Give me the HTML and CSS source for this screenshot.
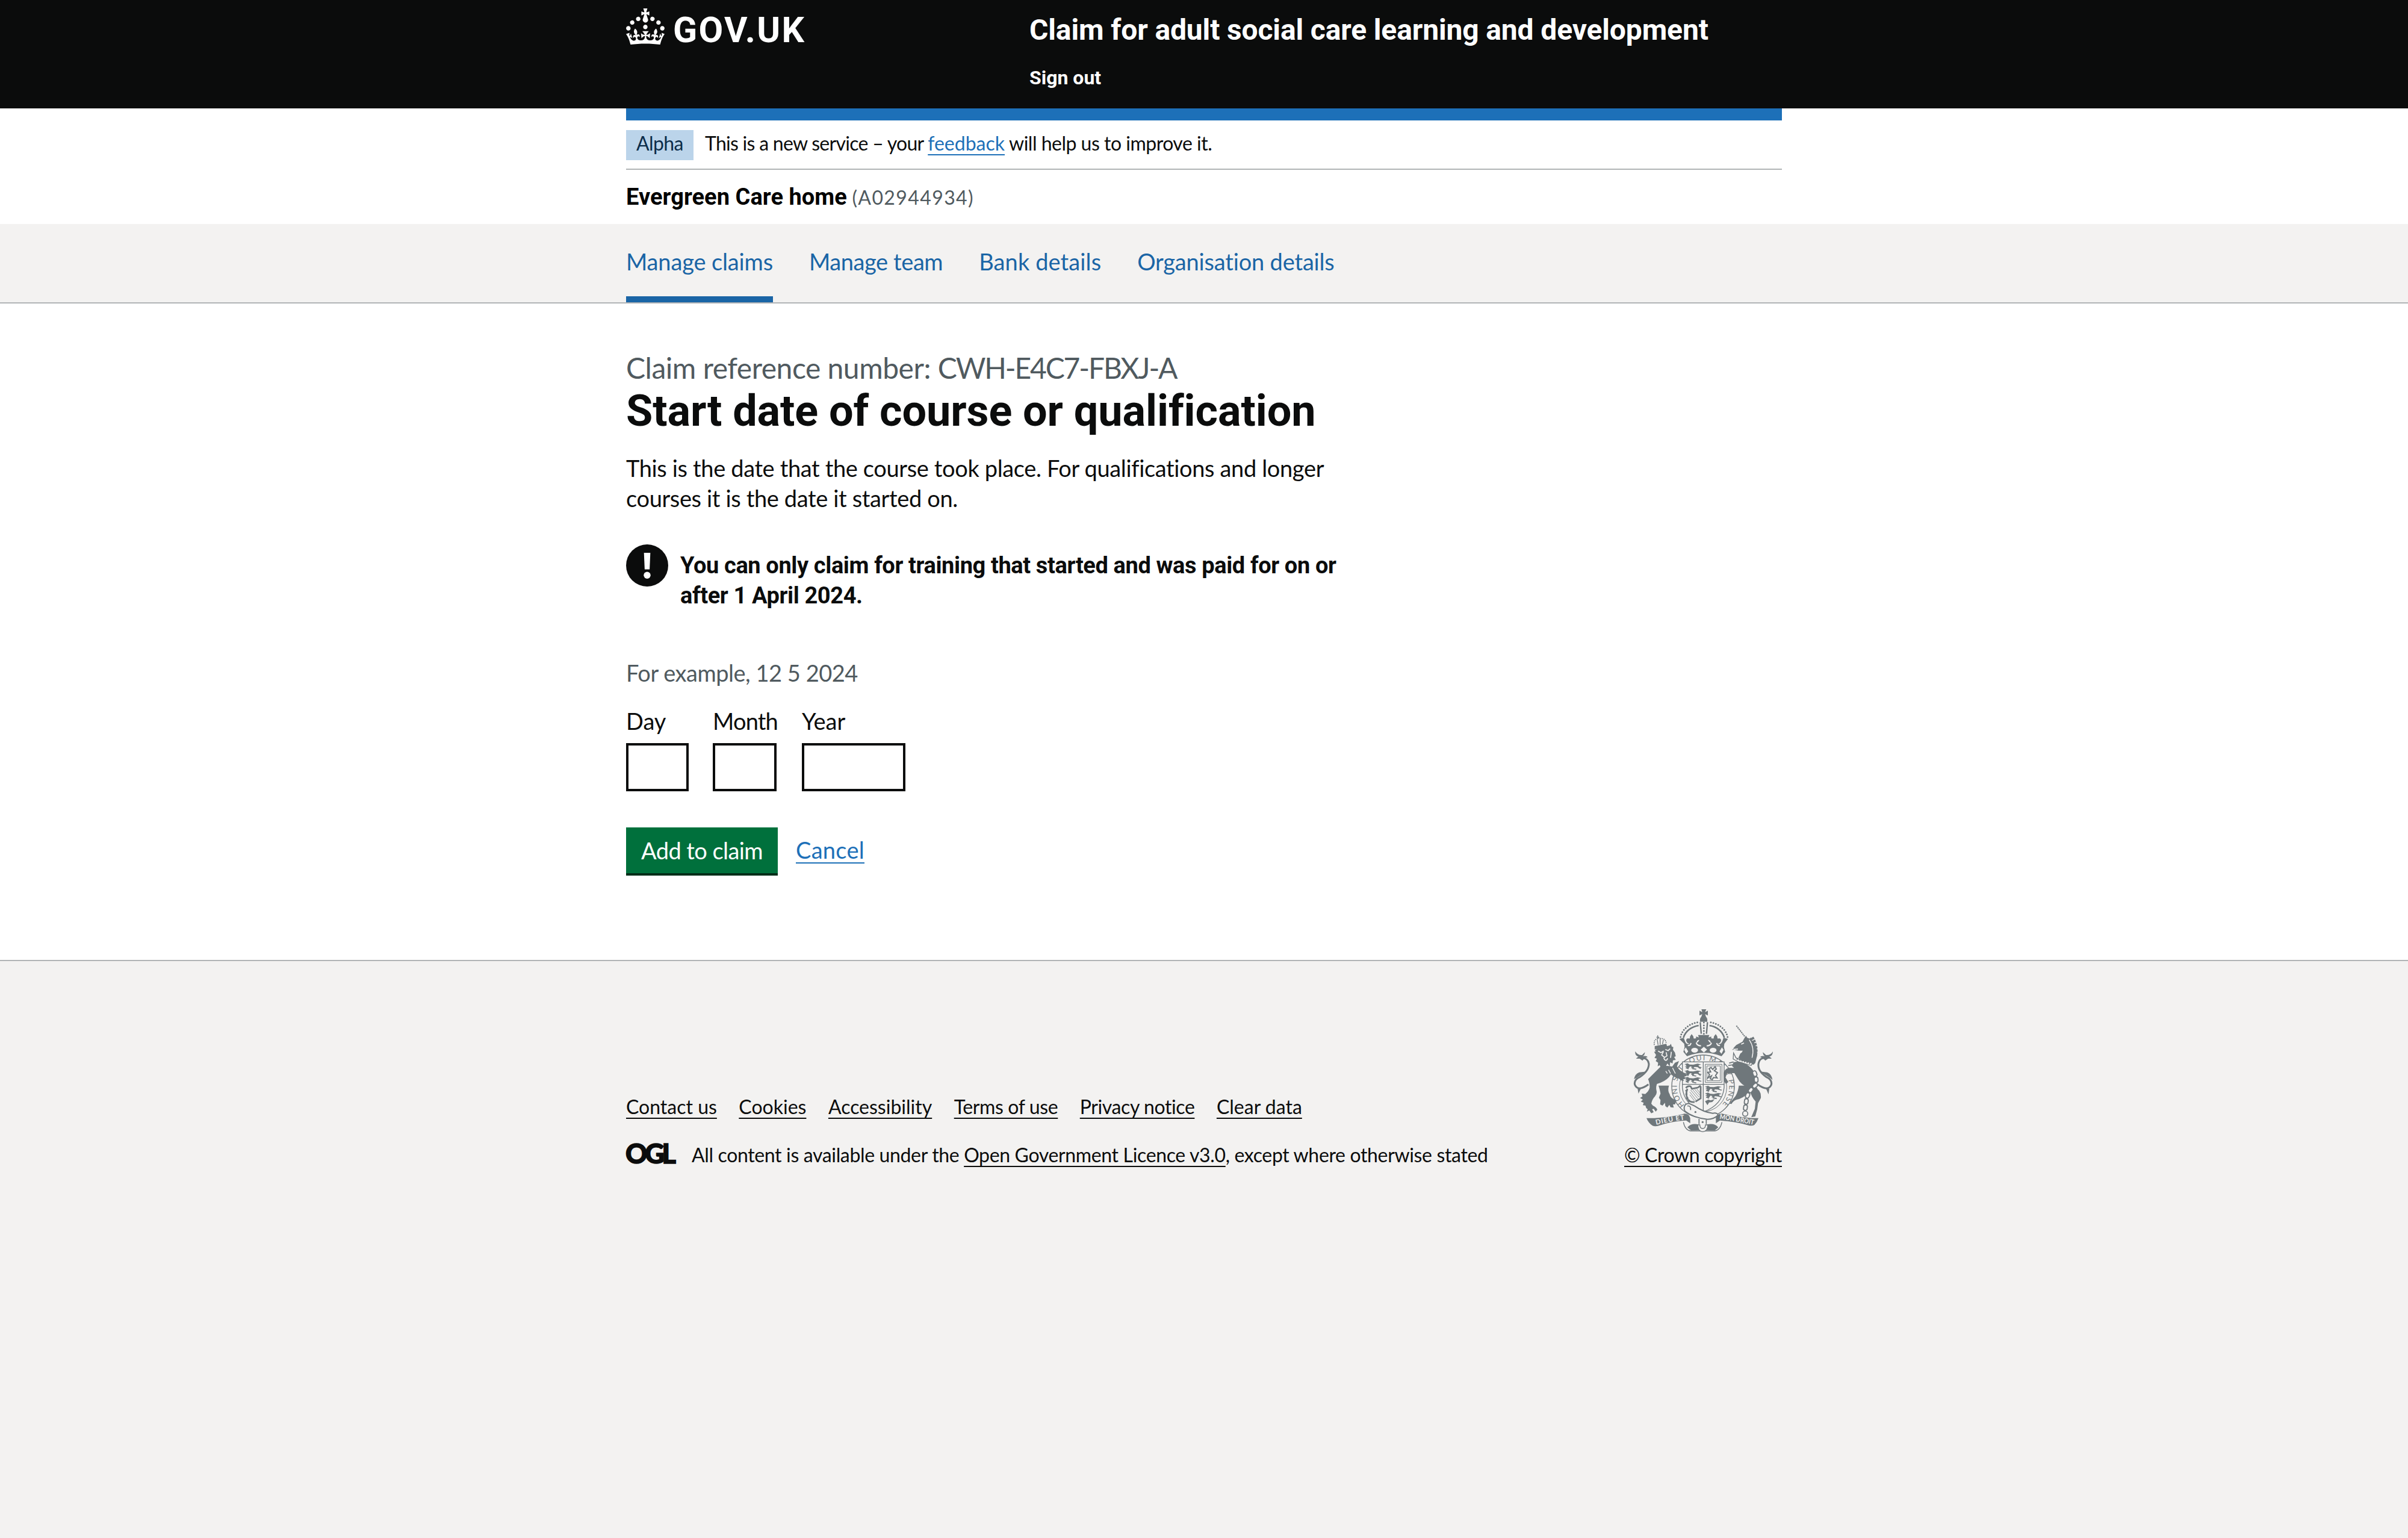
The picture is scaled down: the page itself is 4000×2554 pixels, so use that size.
FILE: index.html
```html
<!DOCTYPE html>
<html lang="en">
<head>
<meta charset="utf-8">
<title>Start date of course or qualification</title>
<link rel="stylesheet" href="styles.css">
</head>
<body>
<header class="header">
  <div class="container header-row">
    <a class="logo" aria-label="GOV.UK">
      <svg class="crown" viewBox="0 0 32 30"><path d="M22.6 10.4c-1 .4-2-.1-2.4-1-.4-.9.1-2 1-2.4.9-.4 2 .1 2.4 1s-.1 2-1 2.4m5 3c-1 .4-2-.1-2.4-1-.4-.9.1-2 1-2.4.9-.4 2 .1 2.4 1s0 2-1 2.4m-10.900 3.700c-.9.4-2-.1-2.400-1-.4-.9.1-2 1-2.400.9-.4 2 .1 2.400 1s-.1 2-1 2.400m14.100 1.100c-1 .4-2-.1-2.400-1-.4-.9.1-2 1-2.400.9-.4 2 .1 2.400 1s-.1 2-1 2.400M17 4.700l2.300 1.200V2.500l-2.300.7-.2-.2.9-3h-3.400l.9 3-.2.2c-.1.1-2.300-.7-2.300-.7v3.400L15 4.700c.1.1.1.2.2.2l-1.300 4c-.1.2-.1.4-.1.6 0 1.100.8 2 1.900 2.200h.7c1-.2 1.900-1.100 1.900-2.100 0-.2 0-.4-.1-.6l-1.300-4c-.1-.2 0-.2.1-.3m-7.600 5.700c.9.4 2-.1 2.400-1 .4-.9-.1-2-1-2.400-.9-.4-2 .1-2.400 1s0 2 1 2.400m-5 3c.9.4 2-.1 2.400-1 .4-.9-.1-2-1-2.400-.9-.4-2 .1-2.400 1s.1 2 1 2.400m-3.200 4.800c.9.4 2-.1 2.400-1 .4-.9-.1-2-1-2.400-.9-.4-2 .1-2.400 1s0 2 1 2.400m14.800 11c4.400 0 8.600.3 12.300.8 1.100-4.500 2.400-7 3.700-8.800l-2.500-.9c.2 1.300.3 1.900 0 2.700-.4-.4-.8-1.100-1.100-2.300l-1.200 4c.7-.5 1.300-.8 2-.9-1.100 2.500-2.600 3.100-3.500 3-1.100-.2-1.700-1.200-1.500-2.100.3-1.200 1.500-1.500 2.100-.1 1.100-2.300-.8-3-2-2.300 1.900-1.900 2.100-3.500.6-5.600-2.100 1.600-2.100 3.200-1.200 5.500-1.200-1.400-3.200-.6-2.500 1.600.9-1.400 2.100-.5 1.900.8-.2 1.100-1.700 2.100-3.500 1.900-2.700-.2-2.900-2.100-2.900-3.600.7-.1 1.900.5 2.900 1.900l.4-4.300c-1.100 1.100-2.100 1.400-3.200 1.400.4-1.200 2.100-3 2.100-3h-5.400s1.700 1.900 2.100 3c-1.100 0-2.100-.2-3.200-1.400l.4 4.300c1-1.400 2.200-2 2.900-1.900-.1 1.500-.2 3.400-2.900 3.600-1.900.2-3.400-.8-3.500-1.900-.2-1.300 1-2.200 1.900-.8.7-2.300-1.200-3-2.500-1.600.9-2.200.9-3.900-1.200-5.500-1.500 2-1.300 3.700.6 5.600-1.200-.7-3.100 0-2 2.300.6-1.400 1.800-1.100 2.100.1.2.9-.3 1.900-1.500 2.100-.9.2-2.400-.5-3.500-3 .6 0 1.200.3 2 .9l-1.200-4c-.3 1.100-.7 1.900-1.100 2.300-.3-.8-.2-1.400 0-2.700l-2.900.9C1.300 23 2.600 25.500 3.700 30c3.700-.5 7.900-.8 12.300-.8"/></svg>
      <svg class="wordmark" viewBox="0 0 220 60"><text x="-2" y="56" textLength="218" lengthAdjust="spacing">GOV.UK</text></svg>
    </a>
    <div class="header-content">
      <a class="service-name">Claim for adult social care learning and development</a>
      <a class="sign-out">Sign out</a>
    </div>
  </div>
</header>

<div class="container">
  <div class="blue-bar"></div>
  <div class="phase">
    <strong class="tag">Alpha</strong>
    <p class="phase-text"><span class="t-service">This is a new service – your </span><a class="link t-feedback">feedback</a><span class="t-help"> will help us to improve it.</span></p>
  </div>
  <p class="organisation">Evergreen Care home <span class="org-id">(A02944934)</span></p>
</div>

<nav class="nav">
  <div class="container nav-list">
    <a class="nav-link nav-claims active">Manage claims</a>
    <a class="nav-link nav-team">Manage team</a>
    <a class="nav-link nav-bank">Bank details</a>
    <a class="nav-link nav-org">Organisation details</a>
  </div>
</nav>

<main class="container main">
  <span class="caption">Claim reference number: <span class="reference">CWH-E4C7-FBXJ-A</span></span>
  <h1 class="heading">Start date of course or qualification</h1>
  <p class="body">This is the date that the course took place. For qualifications and longer courses it is the date it started on.</p>
  <div class="warning">
    <svg class="warning-icon" viewBox="0 0 70 70"><circle cx="35" cy="35" r="35" fill="#0b0c0c"/><path d="M29.700 14h10.600l-1.200 27.500h-8.200z" fill="#fff"/><circle cx="35" cy="51.300" r="5.700" fill="#fff"/></svg>
    <strong class="warning-text">You can only claim for training that started and was paid for on or after 1 April 2024.</strong>
  </div>
  <div class="hint">For example, 12 5 2024</div>
  <div class="dates">
    <div class="date-item"><label class="label t-day" for="day">Day</label><input class="input input-day" id="day"></div>
    <div class="date-item item-month"><label class="label t-month" for="month">Month</label><input class="input input-month" id="month"></div>
    <div class="date-item"><label class="label t-year" for="year">Year</label><input class="input input-year" id="year"></div>
  </div>
  <div class="actions">
    <button class="button">Add to claim</button>
    <a class="link cancel">Cancel</a>
  </div>
</main>

<footer class="footer">
  <div class="container footer-row">
    <div class="footer-main">
      <div class="footer-links">
        <a class="f-link f-contact">Contact us</a>
        <a class="f-link f-cookies">Cookies</a>
        <a class="f-link f-access">Accessibility</a>
        <a class="f-link f-terms">Terms of use</a>
        <a class="f-link f-privacy">Privacy notice</a>
        <a class="f-link f-clear">Clear data</a>
      </div>
      <div class="licence">
        <svg class="ogl" viewBox="0 0 84 36"><text x="-1" y="33.500" textLength="84" lengthAdjust="spacing">OGL</text></svg>
        <p class="licence-text"><span>All content is available under the </span><a class="f-link">Open Government Licence v3.0</a><span>, except where otherwise stated</span></p>
      </div>
    </div>
    <div class="copyright">
      <svg class="crest" viewBox="102 288 696 612" fill="#6f777b">
        <!-- imperial crown -->
        <path d="M442 288h24l-6 14 14-7v24l-14-7 5 14q8 6 6 24h-36q-2-18 6-24l5-14-14 7v-24l14 7z"/>
        <g fill="none" stroke="#6f777b">
          <path d="M338 426C346 384 390 354 434 352M572 426C564 384 520 354 476 352" stroke-width="9" stroke-linecap="round" stroke-dasharray="0 13"/>
          <path d="M352 430C362 396 394 374 428 369M556 430C546 396 516 374 482 369" stroke-width="8"/>
          <path d="M436 352l5 58M472 352l-5 58" stroke-width="7"/>
          <path d="M454 354v60" stroke-width="9" stroke-linecap="round" stroke-dasharray="0 14"/>
        </g>
        <path d="M332 436l22-6 6 18q8 18 22 12-16-4-16-18 2-12 16-8l2-2q0-10 9-20 10 10 10 20l2 2q14-4 16 8 0 10-8 14 12 0 18-14l-2-2-14 8v-24l14 4-4-12h56l-4 12 14-4v24l-14-8-2 2q6 14 18 14-8-4-8-14 2-12 16-8l2-2q0-10 10-20 9 10 9 20l2 2q14-4 16 8 0 14-16 18 14 6 22-12l6-18 22 6-18 24-2 16 6 24-18 22q-86-34-172 0l-18-22 6-24-2-16z"/>
        <g fill="#f3f2f1">
          <ellipse cx="408" cy="492" rx="17" ry="12"/><ellipse cx="500" cy="492" rx="17" ry="12"/>
          <path d="M438 489l16-14 16 14-16 14zM356 490l8-12 12 20-10 12zM552 490l-8-12-12 20 10 12z"/>
        </g>
        <path d="M374 468q12 4 16-12M416 456q6 14 24 14M534 468q-12 4-16-12M492 456q-6 14-24 14" fill="none" stroke="#f3f2f1" stroke-width="6"/>
        <!-- garter -->
        <ellipse cx="450" cy="672" rx="156" ry="156" fill="#f3f2f1" stroke="#6f777b" stroke-width="4"/>
        <path id="garter" d="M358 765A131 131 0 0 1 335 610A131 131 0 0 1 575 635A131 131 0 0 1 470 802" fill="none"/>
        <text class="motto"><textPath href="#garter" textLength="610" lengthAdjust="spacing">HONI SOIT QUI MAL Y PENSE</textPath></text>
        <ellipse cx="450" cy="676" rx="118" ry="122" fill="#f3f2f1" stroke="#6f777b" stroke-width="3"/>
        <!-- shield -->
        <path d="M347 550h208v128q-8 86-104 122-96-36-104-122z" fill="#f3f2f1" stroke="#6f777b" stroke-width="4"/>
        <path d="M451 550v248M347 662h208" stroke="#6f777b" stroke-width="4"/>
        <path id="lion" d="M357 562l16-5 10 6 18 1 22-5 18 4-14 4 4 7 12 3-4 4-18-5-14-1-4 6-14 0 6-6-10-3-6 9-16 1 6-7-10-3 8-3-2-4z"/>
        <use href="#lion" y="34"/><use href="#lion" y="68"/>
        <path d="M364 579l14 6M396 583l20 4M426 576l12 8M364 613l14 6M396 617l20 4M426 610l12 8M364 647l14 6M396 651l20 4" stroke="#6f777b" stroke-width="5"/>
        <g transform="translate(102 112)"><use href="#lion"/><use href="#lion" y="34"/><path d="M364 579l14 6M396 583l20 4M364 613l14 6M396 617l20 4" stroke="#6f777b" stroke-width="6"/></g>
        <path d="M460 746l16-8 12 4 20-6-12 14-16 2-8 14z"/>
        <g fill="none" stroke="#6f777b">
          <path d="M461 562h83v90h-83zM469 570h67v74h-67z" stroke-width="3"/>
          <path d="M480 584l10-6 8 10 12-14 6 12-10 8 16 10-10 14 8 12-18-2-6 10-10-4 6-14-18 10 8-16-8-12 14-2z" stroke-width="6"/>
          <path d="M364 680q10-12 24-8l6 12 30-6 14-10M372 684q-12 30 4 56 10 12 32 10M438 672v60l-26 16" stroke-width="8"/>
          <path d="M388 690l36 44M384 700l32 42M398 688l32 38M408 686l26 30M418 684l18 22M384 714l24 32" stroke-width="2.500"/>
          <path d="M362 692l10 4M362 712l10-2M366 732l10-4M376 748l8-8" stroke-width="7"/>
        </g>
        <!-- lion supporter -->
        <path d="M246 574q24-8 50 0l14-20 20-8-10 26q10 22 44 36l4 12-12 4 10 8-16 6 6 8-16-4-10-8q-24-6-40-22l-10 14q-20 22-60 34-6 18-2 34 4 14-8 28-14 14-18 36l8 10q16 6 22 20l-8 10-10-14-8 2 8 14-12 6-10-14-12 6 4-12q-12-8-10-18l-14-2 4-12-14-6 10-10-14-8 12-8-4-14 18 2q18-14 22-32 0-26-8-42 40-40 70-70z"/>
        <path d="M228 668h52q-8 26 4 44 2 20 34 30l-8 20h-10l4 16-16-2-6-12-10 14-10-8-2-16-12 14-12-6 2-22-8-12 8-20q-4-24-10-40z"/>
        <path d="M264 596l8 12M278 590l10 18M298 580l14 28" stroke="#f3f2f1" stroke-width="4"/>
        <path d="M209 472l58-12 4 14-62 14z"/>
        <path d="M207 466q-4-30 20-32 6-6 12 0 24-2 28 24" fill="none" stroke="#6f777b" stroke-width="5" stroke-dasharray="5 4"/>
        <path d="M224 418v20M217 427h14M236 436v28M222 440l4 26M252 440l-4 22" fill="none" stroke="#6f777b" stroke-width="4"/>
        <path d="M210 492l12-8 62-16 6-8 4 14 8 2-2 14 10 14 4 18-8 4 8 14-14 2-2 16-12-6-2 20-12-14-10 20-12-4-8 14-8-22-10 6 2-18-12-8 6-12-12-4 8-14-10-16 8-2z"/>
        <path d="M226 496l14 8 14-8M262 488l14 6 10-10M252 500l-8 16 14 12 12-8-4-18M254 530q10 24 20 2M292 500l-4 30" fill="none" stroke="#f3f2f1" stroke-width="5"/>
        <path d="M178 662Q126 700 110 664Q104 640 134 626Q180 596 180 560Q174 526 138 532" fill="none" stroke="#6f777b" stroke-width="9"/>
        <path d="M112 498q14 20 34 18l14-14q0 14-10 20 16-4 24 4-18 6-26 18l-14-10-18 0q6-8 12-10-18-4-16-26zM106 636q4-26 26-34l40-4-26 14-28 18zM128 708l-4-24h16q-6 12-12 24z"/>
        <!-- unicorn supporter -->
        <path d="M616 370l42 54" stroke="#6f777b" stroke-width="6" stroke-dasharray="7 3"/>
        <path d="M600 484l6-8 10-10 30-16 12-22 6-8 6 10 12 4 6-6 2 12q14 8 20 24l8 22 2 30-10 40-8 8q-50-12-76-34l10-22q8-4 12-14l-22 0-10-2-12-2-10 0 10-6z"/>
        <path d="M640 462l14-6M602 488l22-2" stroke="#f3f2f1" stroke-width="5"/>
        <path d="M688 432q28 46 14 92" fill="none" stroke="#6f777b" stroke-width="30" stroke-dasharray="11 4"/>
        <path d="M680 440q28 40 14 90" fill="none" stroke="#f3f2f1" stroke-width="4"/>
        <path d="M602 506l12 24 26 12 56 14-6 12-60-16-30-16z" fill="#f3f2f1" stroke="#6f777b" stroke-width="4"/>
        <path d="M618 534l70 24" stroke="#6f777b" stroke-width="9" stroke-dasharray="6 7"/>
        <path d="M580 556l22-6M576 568l26-4" stroke="#6f777b" stroke-width="5"/>
        <path d="M602 552q30-10 64 10 26 16 38 38 14 30 10 58-2 20 16 36 10 14 8 36l-14 26-4 30-10 36-20 4 18-42 4-36q-22-24-28-54l-6-14q-38-14-56-48l-16-26-36 0-8 22 14 22-12 10-10-14-2-40q8-24 28-26h24l-10-10z"/>
        <path d="M628 668h50q4 22-4 38-24 26-56 32-16 4-26 22l-10-2q14-20 30-38 14-26 16-52z"/>
        <path d="M706 604q14 34 6 62-34 28-44 62l-8 60" fill="none" stroke="#6f777b" stroke-width="24" stroke-linecap="round" stroke-dasharray="9 22"/>
        <path d="M706 604q14 34 6 62-34 28-44 62l-8 60" fill="none" stroke="#f3f2f1" stroke-width="13" stroke-linecap="round" stroke-dasharray="9 22"/>
        <circle cx="660" cy="808" r="13" fill="#f3f2f1" stroke="#6f777b" stroke-width="5"/>
        <path d="M722 662Q774 700 790 664Q796 640 766 626Q722 596 726 560Q732 526 764 532" fill="none" stroke="#6f777b" stroke-width="9"/>
        <path d="M798 498q-12 20-34 18l-16-14q0 14 10 20-16-4-24 4 18 6 26 18l14-10 18 0q-6-8-12-10 18-4 18-26zM796 640q-4-30-26-38l-38-4 24 14 28 18zM776 712l4-28h-16q6 12 12 28z"/>
        <!-- ribbon and belt -->
        <path d="M168 830h40q80-4 150-22 22 0 28 22v26l-20-14q-78 4-136 26-20 6-32 0-20-14-30-38zM726 830h-34q-84-6-148-22-22 0-30 20v28l20-14q84 6 142 24 20 4 30-2 14-16 20-34z"/>
        <path d="M352 850q8 40 36 44h120q28-4 36-44" fill="none" stroke="#6f777b" stroke-width="4"/>
        <path d="M372 876q20-22 56-14l10 28-48 2zM526 876q-20-22-56-14l-10 28 48 2z"/>
        <path d="M356 776q4-20 26-18l26 12q46 32 90 36 26-4 26 10-20 20-52 20-70-6-112-40-6-10-4-20z" fill="#f3f2f1" stroke="#6f777b" stroke-width="6"/>
        <path d="M430 834v26M466 838v22M372 770q18-4 16 20" fill="none" stroke="#6f777b" stroke-width="5"/>
        <path d="M424 864q0 32 24 34 26-2 26-34l-12 0q0 18-14 18-14 0-14-18z" fill="#f3f2f1" stroke="#6f777b" stroke-width="4"/>
        <circle cx="412" cy="800" r="5"/><circle cx="448" cy="850" r="5"/>
        <path id="scroll-left" d="M216 863q70-16 146-26" fill="none"/>
        <path id="scroll-right" d="M532 834q88 12 172 30" fill="none"/>
        <text class="scroll"><textPath href="#scroll-left" textLength="144" lengthAdjust="spacing">DIEU ET</textPath></text>
        <text class="scroll"><textPath href="#scroll-right" textLength="172" lengthAdjust="spacingAndGlyphs">MON DROIT</textPath></text>
      </svg>
      <a class="f-link f-crown">© Crown copyright</a>
    </div>
  </div>
</footer>
</body>
</html>
```

FILE: styles.css
```css
* { box-sizing: border-box; }

body {
  margin: 0;
  min-height: 2554px;
  display: flex;
  flex-direction: column;
  font: 400 38px/50px Lato, "Open Sans", sans-serif;
  color: #0b0c0c;
  background: #fff;
}

p, h1 { margin: 0; }

.container { width: 1920px; margin: 0 auto; }

/* Header */
.header { height: 180px; background: #0b0c0c; color: #fff; }
.header-row { display: flex; }
.logo { width: 670px; display: flex; gap: 16px; padding-top: 14px; }
.crown { width: 64px; height: 60px; fill: #fff; }
.wordmark { width: 220px; height: 60px; overflow: visible; }
.wordmark text { font: 700 59px Roboto, sans-serif; fill: #fff; }
.header-content { display: flex; flex-direction: column; gap: 29px; padding-top: 20px; font-family: Roboto, sans-serif; font-weight: 700; }
.service-name { font-size: 48px; line-height: 60px; letter-spacing: -.14px; }
.sign-out { font-size: 32px; line-height: 40px; }

/* Phase banner and organisation */
.blue-bar { height: 20px; background: #1d70b8; }
.phase { display: flex; gap: 19px; padding: 16px 0 14px; border-bottom: 2px solid #b1b4b6; font-size: 32px; line-height: 44px; }
.tag { width: 112px; height: 50px; text-align: center; font-weight: 400; letter-spacing: -.6px; color: #0c2d4a; background: #bbd4ea; }
.phase-text { height: 50px; white-space: pre; }
.t-service { letter-spacing: -.72px; }
.t-help { letter-spacing: -.5px; }
.link { color: #1d70b8; text-decoration: underline 2px; text-underline-offset: 6px; text-decoration-skip-ink: none; }
.organisation { height: 90px; font: 700 38px/90px Roboto, sans-serif; letter-spacing: .05px; color: #000; }
.org-id { margin-left: -1px; font: 400 32px/40px Lato, sans-serif; letter-spacing: 1.4px; color: #505a5f; }

/* Navigation */
.nav { background: #f3f2f1; border-bottom: 2px solid #b1b4b6; }
.nav-list { display: flex; gap: 60px; }
.nav-link { height: 130px; padding-top: 12px; line-height: 101px; color: #1a65a6; }
.nav-link.active { border-bottom: 10px solid #1a65a6; }
.nav-claims { letter-spacing: -.14px; }
.nav-team { letter-spacing: -.4px; }
.nav-bank { letter-spacing: .11px; }
.nav-org { letter-spacing: -.18px; }

/* Main content */
.main { display: flex; flex-direction: column; padding: 77px 0 140px; }
.caption { font-size: 48px; line-height: 60px; letter-spacing: -.48px; color: #505a5f; }
.reference { letter-spacing: -2.15px; }
.heading { margin-top: 2px; font: 700 72px/80px Roboto, sans-serif; letter-spacing: -.08px; }
.body { width: 1220px; margin-top: 29px; letter-spacing: -.36px; }
.warning { display: flex; gap: 20px; width: 1220px; margin-top: 52px; }
.warning-icon { width: 70px; height: 70px; flex: none; }
.warning-text { padding-top: 10px; font: 700 38px/50px Roboto, sans-serif; letter-spacing: -.38px; }
.hint { margin-top: 78px; letter-spacing: -.48px; color: #505a5f; }
.dates { display: flex; gap: 40px; margin-top: 30px; }
.date-item { display: flex; flex-direction: column; gap: 12px; }
.item-month { width: 108px; }
.t-month { letter-spacing: -.8px; }
.input { height: 80px; padding: 10px; border: 4px solid #0b0c0c; border-radius: 0; background: #fff; font: inherit; }
.input-day { width: 104px; }
.input-month { width: 106px; }
.input-year { width: 172px; }
.actions { display: flex; gap: 30px; margin-top: 60px; line-height: 74px; }
.button { width: 252px; height: 80px; padding: 0; border: 0; border-bottom: 4px solid #002d18; background: #00703c; color: #fff; font: inherit; letter-spacing: -.56px; }
.cancel { letter-spacing: .28px; }

/* Footer */
.footer { flex: 1; padding-top: 80px; border-top: 2px solid #b1b4b6; background: #f3f2f1; font-size: 32px; line-height: 40px; }
.footer-row { display: flex; justify-content: space-between; align-items: flex-end; }
.footer-main { display: flex; flex-direction: column; gap: 40px; }
.footer-links { display: flex; gap: 36.5px; }
.f-link { text-decoration: underline 2px; text-underline-offset: 6px; text-decoration-skip-ink: none; }
.f-terms { letter-spacing: -.38px; }
.f-privacy { letter-spacing: -.4px; }
.licence { display: flex; gap: 25px; height: 40px; }
.ogl { width: 84px; height: 36px; overflow: visible; }
.ogl text { font: 900 45px Lato, sans-serif; fill: #0b0c0c; stroke: #0b0c0c; stroke-width: 1.5px; }
.licence-text { white-space: pre; letter-spacing: -.35px; }
.copyright { display: flex; flex-direction: column; align-items: center; gap: 18px; width: 262px; }
.crest { width: 232px; height: 204px; }
.f-crown { letter-spacing: -.38px; white-space: nowrap; }
.motto { font: 400 36px Lato, sans-serif; }
.scroll { font: 700 34px Lato, sans-serif; fill: #f3f2f1; }
```
